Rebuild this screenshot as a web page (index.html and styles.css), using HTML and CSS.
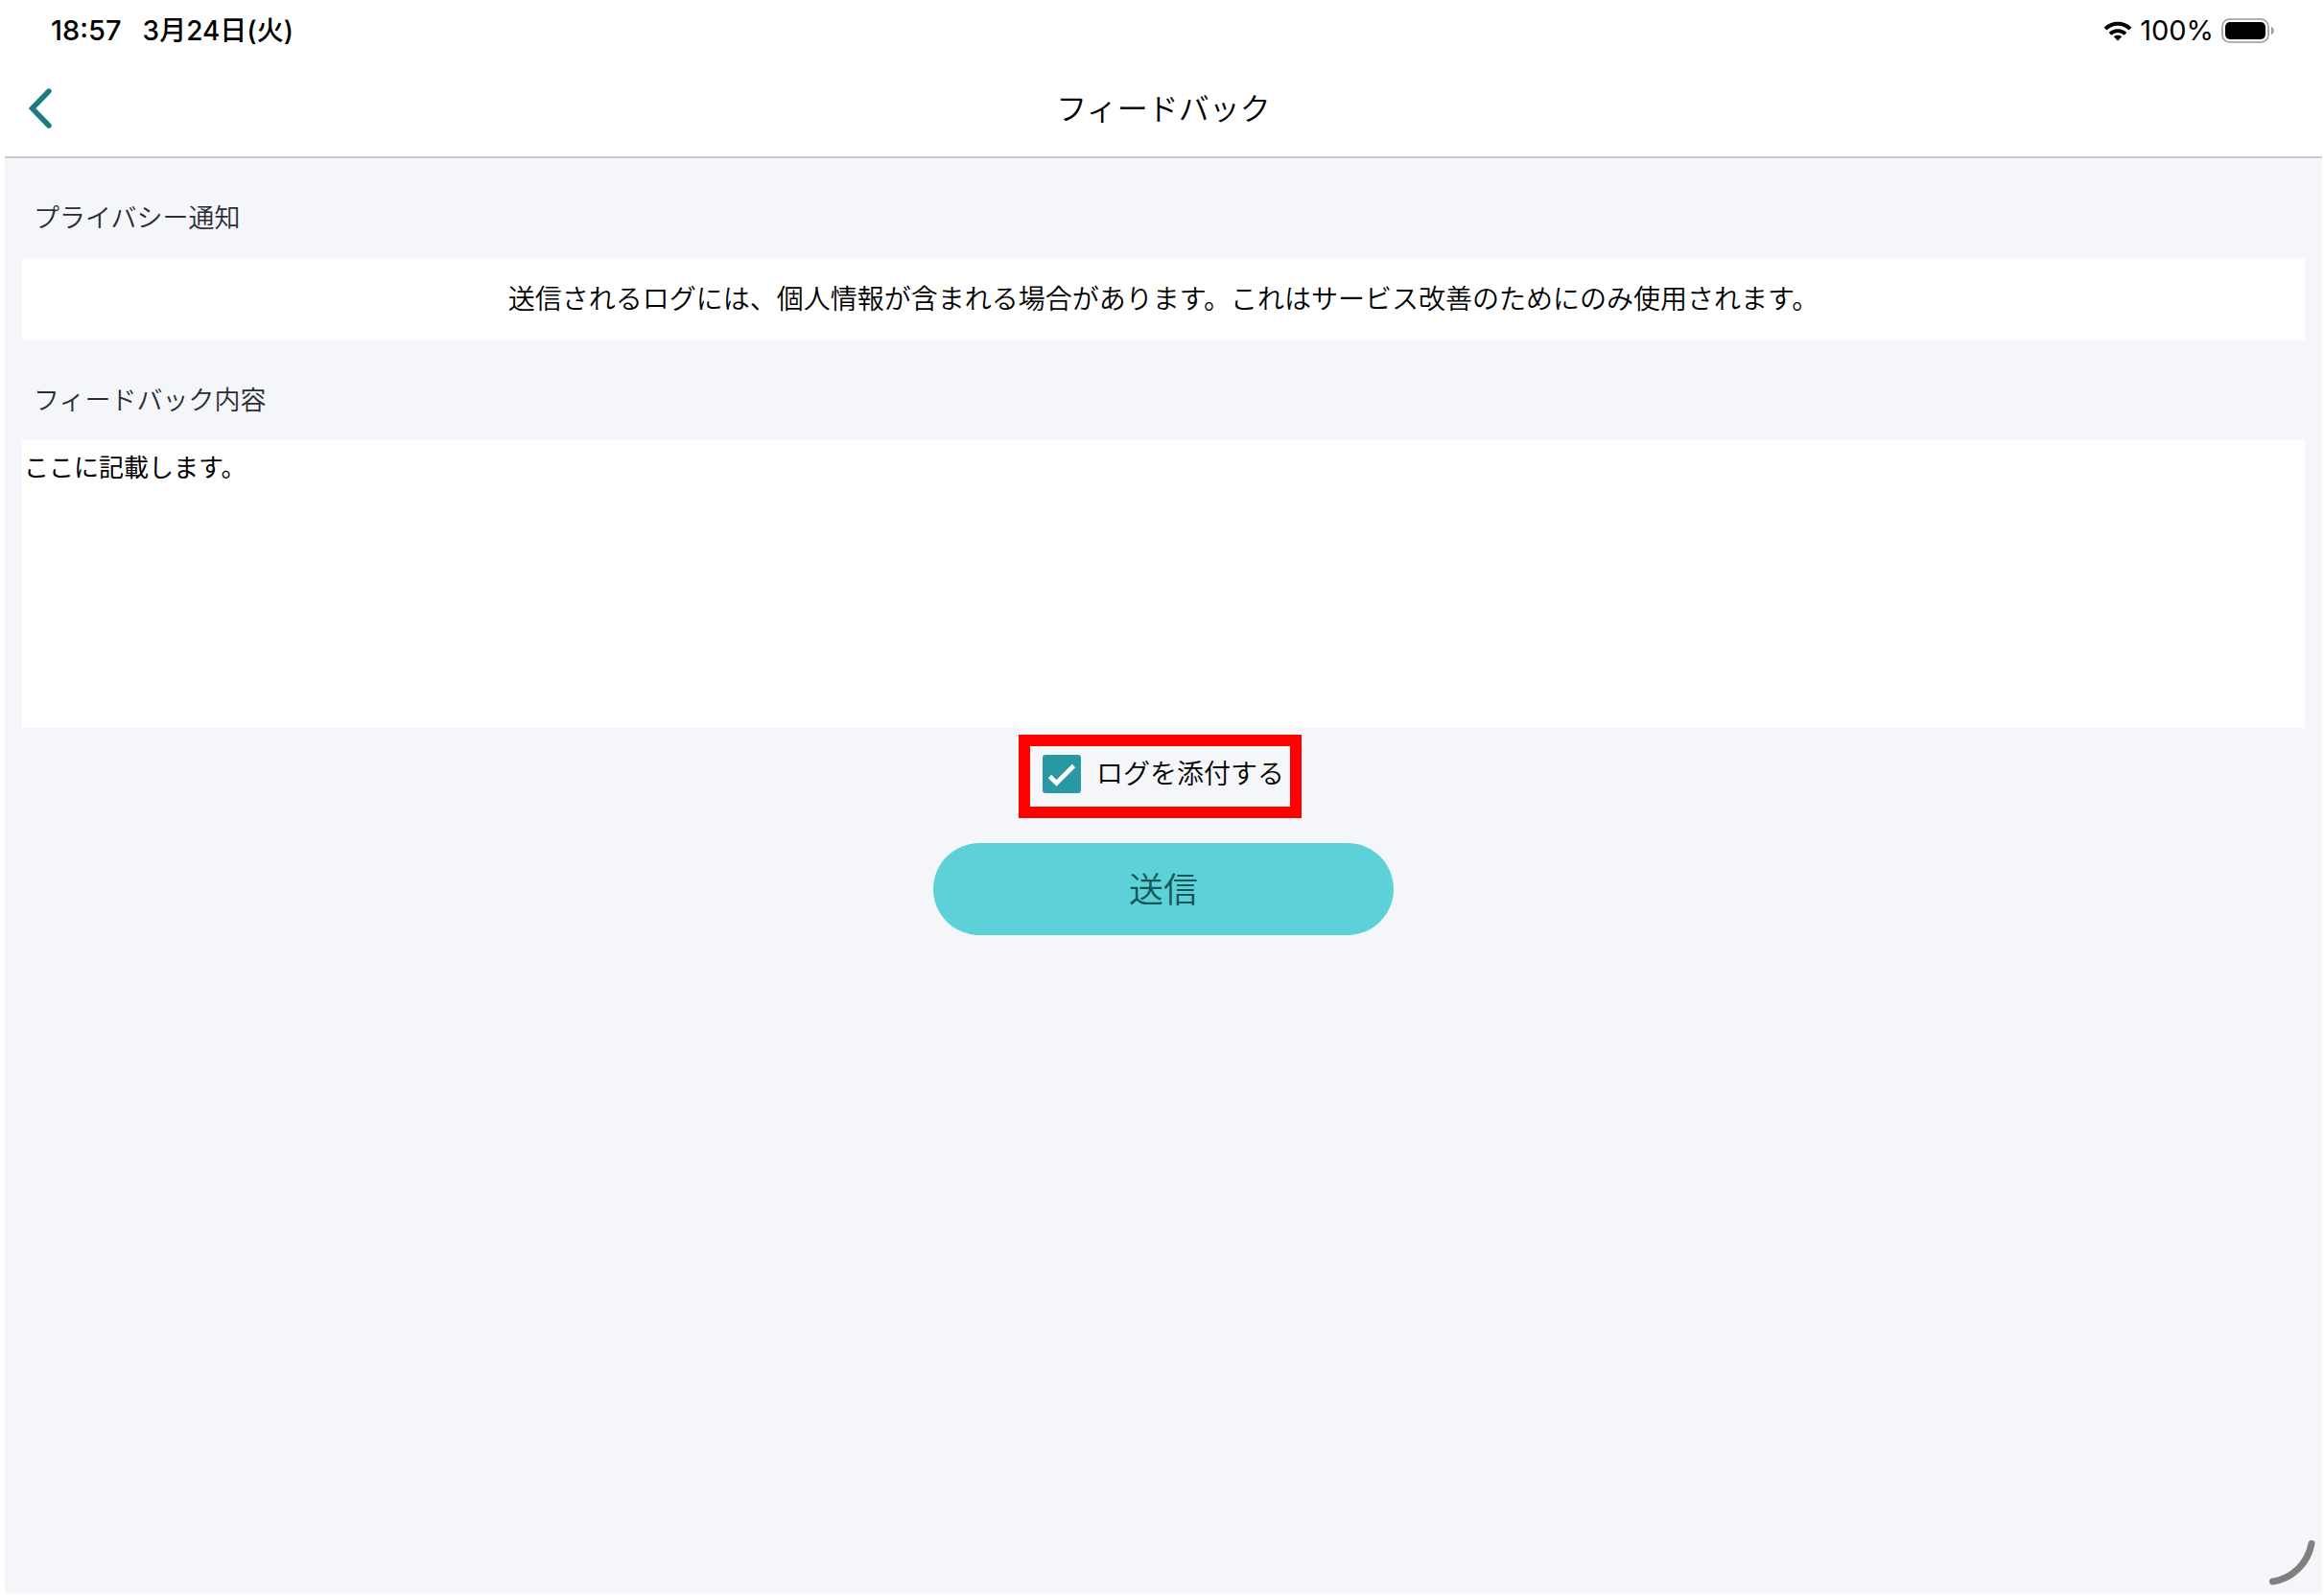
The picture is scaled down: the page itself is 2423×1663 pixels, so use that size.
FILE: index.html
```
<!DOCTYPE html>
<html lang="ja">
<head>
    <meta charset="UTF-8">
    <meta name="viewport" content="width=device-width, initial-scale=1.0">
    <title>フィードバック</title>
    <link rel="stylesheet" href="styles.css">
</head>
<body>
    <div class="screen">
        <header class="header">
            <div class="status-bar">
                <span class="status-time">18:57</span>
                <span class="status-date">3月24日(火)</span>
                <div class="status-icons">
                    <svg class="wifi" viewBox="0 0 30 21" aria-hidden="true">
                        <path d="M2 8.2a18.5 18.5 0 0 1 26 0" fill="none" stroke="#000" stroke-width="4"/>
                        <path d="M7 13.4a11.5 11.5 0 0 1 16 0" fill="none" stroke="#000" stroke-width="3.6"/>
                        <path d="M15 20.5l-4.2-4.2a6 6 0 0 1 8.4 0z"/>
                    </svg>
                    <span>100%</span>
                    <svg class="battery" viewBox="0 0 56 26" aria-hidden="true">
                        <rect x="1" y="1" width="48" height="24" rx="7.5" fill="none" stroke="#999" stroke-width="1.6"/>
                        <rect x="4" y="4" width="42" height="18" rx="5"/>
                        <path d="M52 9c3.6 1 3.6 7 0 8z" fill="#999"/>
                    </svg>
                </div>
            </div>
            <nav class="nav-bar">
                <button class="back" type="button" aria-label="戻る">
                    <svg viewBox="0 0 24 42" aria-hidden="true">
                        <path d="M21 3L3.5 21 21 39" fill="none" stroke="#1d7a80" stroke-width="5.4" stroke-linecap="round"/>
                    </svg>
                </button>
                <h1>フィードバック</h1>
            </nav>
        </header>

        <main class="content">
            <h2 class="label">プライバシー通知</h2>
            <p class="notice">送信されるログには、個人情報が含まれる場合があります。これはサービス改善のためにのみ使用されます。</p>

            <form class="form">
                <label class="label" for="feedback">フィードバック内容</label>
                <textarea class="feedback" id="feedback">ここに記載します。</textarea>

                <label class="attach" for="attach-log">
                    <span class="check">
                        <input type="checkbox" id="attach-log" checked>
                        <svg viewBox="0 0 40 40" aria-hidden="true">
                            <path d="M7.5 22.5l7 7L32.5 11.5" fill="none" stroke="#fff" stroke-width="4.6"/>
                        </svg>
                    </span>
                    <span class="attach-text">ログを添付する</span>
                </label>

                <button class="submit" type="submit">送信</button>
            </form>
        </main>

        <svg class="corner" viewBox="0 0 50 50" aria-hidden="true">
            <path d="M45 5.5A49 49 0 0 1 4.5 45" fill="none" stroke="#808080" stroke-width="7" stroke-linecap="round"/>
        </svg>
    </div>
</body>
</html>
```

FILE: styles.css
```
* {
    margin: 0;
    padding: 0;
    box-sizing: border-box;
}

body {
    display: flex;
    min-height: 100vh;
    padding: 0 2px 2px 5px;
    background: #fff;
    color: #000;
    font-family: 'Noto Sans CJK JP', sans-serif;
    font-size: 28px;
    font-weight: 350;
    line-height: 42px;
}

button, textarea {
    font: inherit;
    border: none;
}

.screen {
    position: relative;
    flex: 1;
    background: #f4f6fa;
}

.header {
    background: #fff;
    border-bottom: 2px solid #c8c8cd;
}

.status-bar {
    display: flex;
    align-items: center;
    height: 64px;
    padding: 0 49px 0 48px;
    font-family: Inter, 'Noto Sans CJK JP', sans-serif;
    font-size: 29px;
    font-weight: 500;
}

.status-date {
    margin-left: 22px;
    font-size: 28px;
}

.status-icons {
    display: flex;
    align-items: center;
    gap: 8px;
    margin-left: auto;
    font-weight: 400;
}

.wifi {
    width: 30px;
    height: 21px;
}

.battery {
    width: 56px;
    height: 26px;
}

.nav-bar {
    display: grid;
    grid-template-columns: 72px 1fr 72px;
    align-items: center;
    height: 99px;
    padding-bottom: 2px;
}

.back {
    height: 72px;
    padding-left: 25px;
    background: none;
    text-align: left;
    cursor: pointer;
}

.back svg {
    display: block;
    width: 24px;
    height: 42px;
}

h1 {
    padding-bottom: 4px;
    font-size: 32px;
    font-weight: 350;
    text-align: center;
}

.content {
    padding: 0 18px;
}

.label {
    display: block;
    padding: 40px 12px 22px;
    color: #2b2c36;
    font-size: 27px;
    font-weight: 350;
}

.notice {
    padding: 20px 22px 24px;
    background: #fff;
    text-align: center;
}

.form {
    display: flex;
    flex-direction: column;
}

.feedback {
    height: 300px;
    padding: 6px 2px;
    background: #fff;
    color: #000;
    font-size: 26px;
    font-weight: 400;
    outline: none;
    resize: none;
}

.attach {
    position: relative;
    display: flex;
    align-items: center;
    align-self: center;
    gap: 16px;
    height: 40px;
    margin-top: 28px;
}

/* red marker around the log option */
.attach::after {
    content: '';
    position: absolute;
    inset: -21px -18px -26px -25px;
    border: 12px solid #f00;
    pointer-events: none;
}

.attach-text {
    padding-bottom: 4px;
}

.check {
    display: grid;
    width: 40px;
    height: 40px;
}

.check input,
.check svg {
    grid-area: 1 / 1;
    width: 40px;
    height: 40px;
}

.check input {
    appearance: none;
    border: 2px solid #2899a2;
    border-radius: 3px;
}

.check input:checked {
    background: #2899a2;
}

.check svg {
    visibility: hidden;
    pointer-events: none;
}

.check input:checked + svg {
    visibility: visible;
}

.submit {
    align-self: center;
    width: 480px;
    height: 96px;
    margin-top: 52px;
    padding-bottom: 4px;
    border-radius: 48px;
    background: #5cd1d8;
    color: #16555a;
    font-size: 36px;
    cursor: pointer;
}

.corner {
    position: absolute;
    right: 6px;
    bottom: 7px;
    width: 50px;
    height: 50px;
}
```
